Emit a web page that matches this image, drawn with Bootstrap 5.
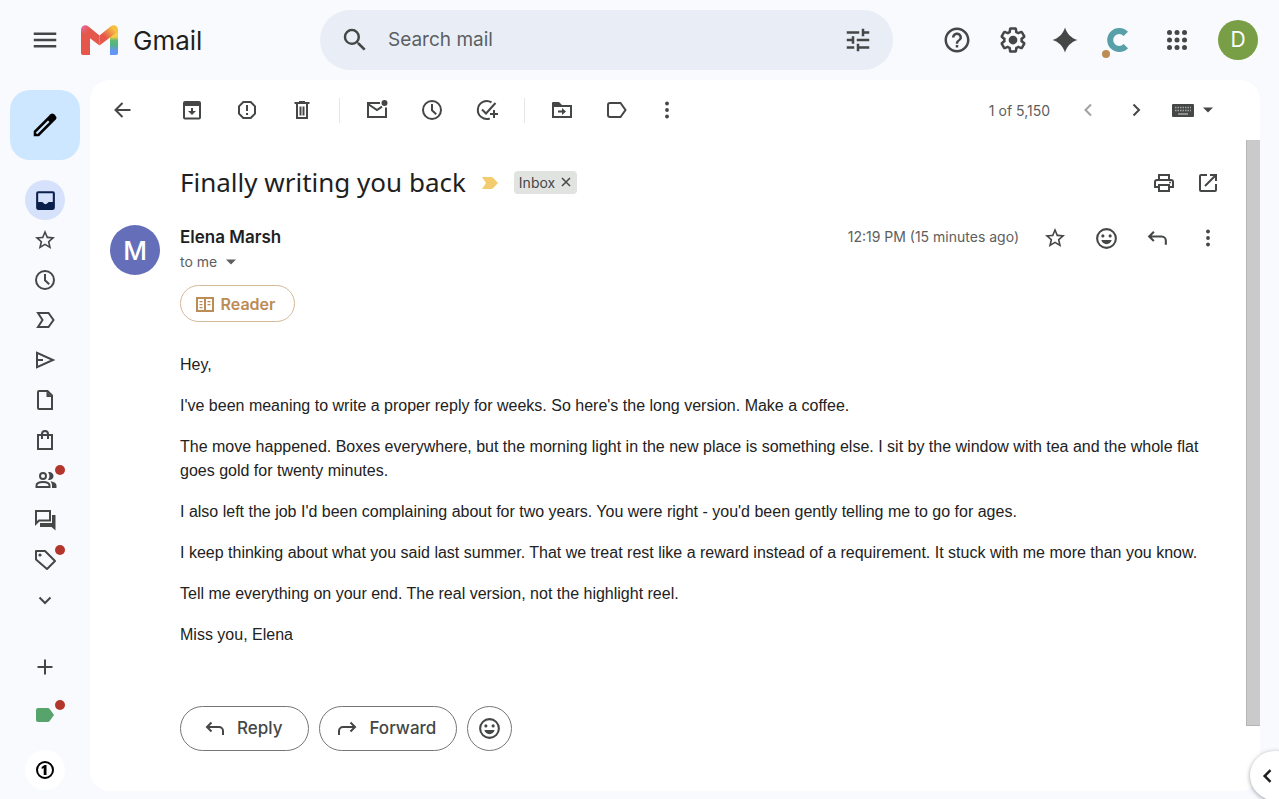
<!DOCTYPE html>
<html lang="en">
<head>
<meta charset="utf-8">
<meta name="viewport" content="width=device-width, initial-scale=1">
<title>Finally writing you back - Gmail</title>
<link href="https://cdn.jsdelivr.net/npm/bootstrap@5.3.0/dist/css/bootstrap.min.css" rel="stylesheet">
<style>
body{background:#f8fafe;color:#1f1f1f;font-family:Inter,Roboto,sans-serif;font-size:14px}
svg{display:block;fill:currentColor;flex:none}
.line{fill:none;stroke:currentColor;stroke-width:2}
.line.thin{stroke-width:1.5}
.line.thick{stroke-width:3}
.i30{width:30px;height:30px}
.i25{width:25px;height:25px}
.i24{width:24px;height:24px}
.i20{width:20px;height:20px}
.icon-btn{border:0;background:none;padding:0;color:#444746;display:flex;align-items:center;justify-content:center;flex:none;text-decoration:none;position:relative}
.box40{width:40px;height:40px;border-radius:50%}
.topbar{height:80px;padding-right:21px}
.brand-area{width:320px;padding-left:30px;gap:17px}
.brand-name{font-size:26px;color:#1f1f1f;text-decoration:none;gap:10px}
.searchbar{height:60px;background:#e9eef6;border-radius:30px;padding:0 20px;margin-right:49px}
.searchbar input{border:0;background:none;outline:0;font-size:19px;color:#444746;padding:0;margin-left:18px;min-width:0}
.searchbar input::placeholder{color:#5b5f62;opacity:1}
.top-icons{gap:22px}
.user-avatar{background:#789e46;color:#fff;font-size:21px}
.rail{width:90px;padding:10px 0}
.compose{width:70px;height:70px;border-radius:20px;background:#cce7ff;color:#000;margin-bottom:20px}
.current{background:#d6e2fb;color:#0b1f4b}
.notice{position:absolute;width:10px;height:10px;border-radius:50%;background:#b3362c;top:5px;right:0}
.panel{background:#fff;border-radius:20px;margin:0 19px 9px 0;overflow:hidden}
.toolbar{height:60px;padding:0 42px 0 13px}
.toolbar .tools{gap:15px}
.tools .back{margin-right:14px}
.tools .kebab{width:30px}
.rule{width:1px;height:25px;background:#e6e7e8;margin:0 2px}
.count{color:#5e5e5e;font-size:14px;margin-right:18px}
.thumb{width:14px;height:90%;background:#cacaca;border-left:1px solid #b4b4b4;border-bottom:1px solid #b4b4b4}
.reading{padding:18px 18px 38px 90px}
.subject{font-family:"Noto Sans",sans-serif;font-size:26px;font-weight:400;line-height:48px}
.subject-row{min-height:50px;margin-bottom:17px}
.subject-row .chip,.subject-row .subject{margin-bottom:2px}
.chip{background:#e1e3e1;border-radius:4px;height:23px;padding:0 6px 0 5px;color:#444746;gap:6px}
.sender-pic{width:50px;height:50px;border-radius:50%;background:#656fb9;color:#fff;font-size:26px;font-weight:500;margin-left:-70px;margin-right:20px}
.sender{font-size:17px;font-weight:600;line-height:24px;margin-bottom:1px}
.muted{color:#5e5e5e;line-height:24px}
.actions{gap:11px}
.actions .box40{height:26px}
.reader{height:37px;width:115px;border:1px solid #d5b998;border-radius:20px;background:#fff;color:#bb8c55;font-size:16px;font-weight:600;margin-top:11px;gap:7px;padding:0 4px 0 0}
.letter{font-family:"Liberation Sans",Arial,sans-serif;font-size:16px;line-height:24px;color:#222;margin-top:31px}
.letter p{margin-bottom:17px}
.answers{gap:10px;margin-top:59px}
.pill{height:45px;border:1px solid #747775;border-radius:23px;background:#fff;color:#444746;font-size:17px;font-weight:500;padding:0 26px 0 22px;gap:10px}
.pill.forward{padding:0 20px 0 15px}
.pill.round{width:45px;padding:0}
.side-tab{position:absolute;right:-21px;bottom:0;width:50px;height:49px;border-radius:25px;background:#fff;color:#1f1f1f;box-shadow:0 1px 4px rgba(60,64,67,.5);padding-right:14px}
.low{margin-top:27px}
.label-link{color:#57a36c;margin-top:8px;margin-bottom:15px}
.addon{background:#fff;color:#000}
</style>
</head>
<body>
<svg width="0" height="0" class="position-absolute" aria-hidden="true">
<symbol id="star" viewBox="0 0 24 24"><path d="M22 9.24l-7.19-.62L12 2 9.19 8.63 2 9.24l5.46 4.73L5.82 21 12 17.27 18.18 21l-1.63-7.03L22 9.24zM12 15.4l-3.76 2.27 1-4.28-3.32-2.88 4.38-.38L12 6.1l1.71 4.04 4.38.38-3.32 2.88 1 4.28L12 15.4z"/></symbol>
<symbol id="clock" viewBox="0 0 24 24"><g class="line"><circle cx="12" cy="12" r="9"/><path d="M12 6v6.2l4.2 4"/></g></symbol>
<symbol id="smile" viewBox="0 0 24 24"><circle class="line" cx="12" cy="12" r="9"/><circle cx="8.5" cy="9.5" r="1.5"/><circle cx="15.5" cy="9.5" r="1.5"/><path d="M7 13.5h10c-.7 2.4-2.7 4-5 4s-4.300-1.600-5-4z"/></symbol>
<symbol id="back-arrow" viewBox="0 0 24 24"><path class="line" d="M8.500 5.500L4 10l4.500 4.500M4 10h12a4 4 0 0 1 4 4v4"/></symbol>
<symbol id="dots" viewBox="0 0 24 24"><circle cx="12" cy="5.500" r="1.900"/><circle cx="12" cy="12" r="1.900"/><circle cx="12" cy="18.500" r="1.900"/></symbol>
<symbol id="caret" viewBox="0 0 24 24"><path d="M6 9h12l-6 6z"/></symbol>
</svg>

<div class="d-flex flex-column min-vh-100 position-relative overflow-hidden">
<header class="topbar d-flex align-items-center">
  <div class="brand-area d-flex align-items-center flex-shrink-0">
    <button class="icon-btn" aria-label="Main menu"><svg class="i30" viewBox="0 0 24 24"><path d="M3 18h18v-2H3v2zm0-5h18v-2H3v2zm0-7v2h18V6H3z"/></svg></button>
    <a href="#" class="brand-name d-flex align-items-center">
      <svg width="46" height="30" viewBox="0 0 46 30">
        <defs>
          <linearGradient id="lg" x2="0" y2="1"><stop offset=".3" stop-color="#f7cb45"/><stop offset=".45" stop-color="#5bb974"/><stop offset=".6" stop-color="#56b381"/><stop offset=".85" stop-color="#6494f8"/></linearGradient>
          <linearGradient id="rg" x1="0" y1="0" x2="1" y2="1"><stop offset="0" stop-color="#e46eae"/><stop offset=".35" stop-color="#e4574a"/></linearGradient>
          <linearGradient id="yg" x1="0" y1="1" x2="1" y2="0"><stop offset=".35" stop-color="#e4574a"/><stop offset=".8" stop-color="#f5c042"/></linearGradient>
        </defs>
        <path fill="#e4574a" d="M4 4h9v26H6a2 2 0 0 1-2-2z"/>
        <path fill="url(#lg)" d="M33 4h8v24a2 2 0 0 1-2 2h-6z"/>
        <path fill="url(#rg)" d="M4 5C4 .5 8.500-1 11.500 1.500L22.500 10.500V20.500L5.500 7.500Q4 6.500 4 5z"/>
        <path fill="url(#yg)" d="M41 5C41 .5 36.500-1 33.500 1.500L22.500 10.500V20.500L39.500 7.500Q41 6.500 41 5z"/>
      </svg>
      <span>Gmail</span>
    </a>
  </div>
  <form class="searchbar d-flex align-items-center flex-grow-1" role="search">
    <button type="button" class="icon-btn" aria-label="Search"><svg class="i30" viewBox="0 0 24 24"><path d="M15.500 14h-.79l-.28-.27A6.470 6.470 0 0 0 16 9.500 6.500 6.500 0 1 0 9.500 16c1.610 0 3.090-.59 4.230-1.570l.27.28v.79l5 4.990L20.490 19l-4.990-5zm-6 0C7.010 14 5 11.990 5 9.500S7.010 5 9.500 5 14 7.010 14 9.500 11.990 14 9.500 14z"/></svg></button>
    <input class="flex-grow-1" type="text" placeholder="Search mail" aria-label="Search mail">
    <button type="button" class="icon-btn" aria-label="Search options"><svg class="i30" viewBox="0 0 24 24"><path d="M3 17v2h6v-2H3zM3 5v2h10V5H3zm10 16v-2h8v-2h-8v-2h-2v6h2zM7 9v2H3v2h4v2h2V9H7zm14 4v-2H11v2h10zm-6-4h2V7h4V5h-4V3h-2v6z"/></svg></button>
  </form>
  <div class="top-icons d-flex align-items-center">
    <button class="icon-btn me-1" aria-label="Support"><svg class="i30" viewBox="0 0 24 24"><path d="M11 18h2v-2h-2v2zm1-16C6.480 2 2 6.480 2 12s4.480 10 10 10 10-4.480 10-10S17.520 2 12 2zm0 18c-4.410 0-8-3.590-8-8s3.590-8 8-8 8 3.590 8 8-3.590 8-8 8zm0-14c-2.210 0-4 1.790-4 4h2c0-1.100.9-2 2-2s2 .9 2 2c0 2-3 1.750-3 5h2c0-2.250 3-2.500 3-5 0-2.210-1.790-4-4-4z"/></svg></button>
    <button class="icon-btn" aria-label="Settings"><svg class="i30" viewBox="0 0 24 24"><path d="M13.850 22.250h-3.700c-.74 0-1.360-.54-1.450-1.270l-.27-1.890c-.27-.14-.53-.29-.79-.46l-1.800.72c-.7.26-1.470-.03-1.810-.65L2.200 15.530c-.35-.66-.2-1.440.36-1.880l1.530-1.190c-.01-.15-.02-.3-.02-.46 0-.15.01-.31.02-.46l-1.520-1.190c-.59-.45-.74-1.260-.37-1.880l1.850-3.190c.34-.62 1.110-.9 1.790-.63l1.810.73c.26-.17.52-.32.78-.46l.27-1.910c.09-.7.71-1.250 1.440-1.250h3.700c.74 0 1.360.54 1.450 1.270l.27 1.890c.27.14.53.29.79.46l1.800-.72c.71-.26 1.480.03 1.820.65l1.840 3.180c.36.66.2 1.440-.36 1.880l-1.520 1.190c.01.15.02.3.02.46s-.01.31-.02.46l1.520 1.190c.56.45.72 1.230.37 1.860l-1.860 3.220c-.34.62-1.110.9-1.800.63l-1.800-.72c-.26.17-.52.32-.78.46l-.27 1.910c-.1.68-.72 1.220-1.460 1.220zm-3.230-2h2.760l.37-2.550.53-.22c.44-.18.88-.44 1.340-.78l.45-.34 2.380.96 1.380-2.400-2.030-1.580.07-.56c.03-.26.06-.51.06-.78s-.03-.53-.06-.78l-.07-.56 2.030-1.580-1.390-2.400-2.390.96-.45-.35c-.42-.32-.87-.58-1.330-.77l-.52-.22-.37-2.550h-2.760l-.37 2.550-.53.21c-.44.19-.88.44-1.340.79l-.45.33-2.380-.95-1.390 2.390 2.030 1.580-.07.56a7 7 0 0 0-.06.79c0 .26.02.53.06.78l.07.56-2.030 1.580 1.380 2.400 2.390-.96.45.35c.43.33.86.58 1.330.77l.53.22.38 2.550z"/><circle cx="12" cy="12" r="3.500"/></svg></button>
    <button class="icon-btn" aria-label="Gemini"><svg class="i30" viewBox="0 0 24 24"><path d="M12 2c1.500 5 5 8.500 10 10-5 1.500-8.500 5-10 10-1.500-5-5-8.500-10-10 5-1.500 8.500-5 10-10z"/></svg></button>
    <button class="icon-btn" aria-label="Extension"><svg width="30" height="36" viewBox="0 0 30 36"><path d="M23.800 11.900A9 9 0 1 0 23.800 24.100" fill="none" stroke="#58a0a8" stroke-width="6"/><circle cx="4" cy="32" r="4" fill="#bd8c55"/></svg></button>
    <button class="icon-btn ms-2" aria-label="Google apps"><svg class="i30" viewBox="0 0 24 24"><g id="dot-row"><circle cx="6" cy="6" r="2"/><circle cx="12" cy="6" r="2"/><circle cx="18" cy="6" r="2"/></g><use href="#dot-row" y="6"/><use href="#dot-row" y="12"/></svg></button>
    <button class="icon-btn box40 user-avatar ms-1" aria-label="Account">D</button>
  </div>
</header>

<div class="d-flex flex-grow-1">
<nav class="rail d-flex flex-column align-items-center flex-shrink-0" aria-label="Mailboxes">
  <button class="icon-btn compose" aria-label="Compose"><svg class="i30" viewBox="0 0 24 24"><path d="M3 16.800V21h4.200L20.600 7.600a2 2 0 0 0 0-2.800l-1.400-1.400a2 2 0 0 0-2.800 0z"/><path d="M5.200 18.800l9.800-9.800" stroke="#cce7ff" stroke-width="1.700"/></svg></button>
  <a href="#" class="icon-btn box40 current" aria-label="Inbox"><svg class="i25" viewBox="0 0 24 24"><path d="M19 3H5a2 2 0 0 0-2 2v14c0 1.100.9 2 2 2h14a2 2 0 0 0 2-2V5a2 2 0 0 0-2-2zm0 10.500h-3.500q-.8 0-1.300.7-.8 1.300-2.200 1.300t-2.200-1.300q-.5-.7-1.300-.7H5V5h14z"/></svg></a>
  <a href="#" class="icon-btn box40" aria-label="Starred"><svg class="i24"><use href="#star"/></svg></a>
  <a href="#" class="icon-btn box40" aria-label="Snoozed"><svg class="i24"><use href="#clock"/></svg></a>
  <a href="#" class="icon-btn box40" aria-label="Important"><svg class="i24" viewBox="0 0 24 24"><path class="line" d="M5 5h10.500l5 7-5 7H5l4.500-7z"/></svg></a>
  <a href="#" class="icon-btn box40" aria-label="Sent"><svg class="i24" viewBox="0 0 24 24"><path class="line" d="M4 4.800v14.400L20 12zM4 12h6"/></svg></a>
  <a href="#" class="icon-btn box40" aria-label="Drafts"><svg class="i24" viewBox="0 0 24 24"><path class="line" d="M6 3h8.500L19 7.500V21H6q-1 0-1-1V4q0-1 1-1z"/><path d="M13.500 3v6H19z"/></svg></a>
  <a href="#" class="icon-btn box40" aria-label="Purchases"><svg class="i24" viewBox="0 0 24 24"><path class="line" d="M5 7h14v14H5zM9 11V6a3 3 0 0 1 6 0v5"/></svg></a>
  <a href="#" class="icon-btn box40" aria-label="Social"><svg class="i24" viewBox="0 0 24 24"><g class="line"><circle cx="10" cy="8" r="3"/><path d="M3.500 19v-1.500C3.500 15 7 14 10 14s6.500 1 6.500 3.500V19z"/></g><path d="M15 4.300a4 4 0 1 1 0 7.400 5.500 5.500 0 0 0 0-7.400zM17.500 13.200c3 .5 6 1.700 6 4.300V20H19v-2.500c0-1.800-.6-3.200-1.500-4.300z"/></svg><span class="notice"></span></a>
  <a href="#" class="icon-btn box40" aria-label="Forums"><svg class="i24" viewBox="0 0 24 24"><path class="line" d="M3 3h14v9.500H6l-3 3z"/><path d="M19 7h3.500v15.500L18.500 19H7v-4h12z"/></svg></a>
  <a href="#" class="icon-btn box40" aria-label="Promotions"><svg class="i24" viewBox="0 0 24 24"><path class="line" stroke-linejoin="round" d="M3 3h9l10 10-8 8L3 11.500z"/><circle cx="7" cy="7" r="1.600"/></svg><span class="notice"></span></a>
  <button class="icon-btn box40" aria-label="More"><svg class="i24" viewBox="0 0 24 24"><path class="line" d="M6.500 9.500L12 15l5.500-5.500"/></svg></button>
  <button class="icon-btn box40 low" aria-label="Create label"><svg class="i24" viewBox="0 0 24 24"><path class="line" d="M12 4.500v15M4.500 12h15"/></svg></button>
  <a href="#" class="icon-btn box40 label-link" aria-label="Label"><svg class="i24" viewBox="0 0 24 24"><path d="M5 5h9.500q1.500 0 2.200 1L21 12l-4.300 6q-.7 1-2.200 1H5q-2 0-2-2V7q0-2 2-2z"/></svg><span class="notice"></span></a>
  <button class="icon-btn box40 addon" aria-label="Password manager"><svg class="i24" viewBox="0 0 24 24"><circle class="line" cx="12" cy="12" r="8"/><path d="M10.700 17V10l-2 1V9l2.800-2h2v10z"/></svg></button>
</nav>

<main class="panel d-flex flex-column flex-grow-1">
  <div class="toolbar d-flex align-items-center justify-content-between">
    <div class="tools d-flex align-items-center">
      <button class="icon-btn box40 back" aria-label="Back to inbox"><svg class="i24" viewBox="0 0 24 24"><path class="line" d="M19.500 12H5M11.500 5L4.500 12l7 7"/></svg></button>
      <button class="icon-btn box40" aria-label="Archive"><svg class="i24" viewBox="0 0 24 24"><rect class="line" x="4" y="4" width="16" height="16.500" rx="1"/><path d="M4 4.500h16V8H4zM11 10h2v3h3l-4 4-4-4h3z"/></svg></button>
      <button class="icon-btn box40" aria-label="Report spam"><svg class="i24" viewBox="0 0 24 24"><path class="line" d="M8.300 4h7.400L20 8.300v7.400L15.700 20H8.300L4 15.700V8.300z"/><path d="M11 7h2v6h-2zM11 15h2v2h-2z"/></svg></button>
      <button class="icon-btn box40" aria-label="Delete"><svg class="i24" viewBox="0 0 24 24"><path class="line" d="M7 6v14h10V6M4.500 5h15M9 4h6M10.500 8.500v9M13.500 8.500v9"/></svg></button>
      <span class="rule"></span>
      <button class="icon-btn box40" aria-label="Mark as unread"><svg class="i24" viewBox="0 0 24 24"><path class="line" d="M15 5H3v14h18V9.500M3 6l9 6 5-3.300"/><circle cx="19.500" cy="5" r="3"/></svg></button>
      <button class="icon-btn box40" aria-label="Snooze"><svg class="i24"><use href="#clock"/></svg></button>
      <button class="icon-btn box40" aria-label="Add to tasks"><svg class="i24" viewBox="0 0 24 24"><path class="line" d="M16.500 4.300A9 9 0 1 0 14.800 20.500M7 11.500l4 4L20.500 5M19 12v8M15 16h8"/></svg></button>
      <span class="rule"></span>
      <button class="icon-btn box40" aria-label="Move to"><svg class="i24" viewBox="0 0 24 24"><path class="line" d="M3 6v13h18V8H11L9 6z"/><path d="M2 5q0-1 1-1h6l3 3v2H2zM12 10l4 3.500-4 3.500v-2.500H8v-2h4z"/></svg></button>
      <button class="icon-btn box40" aria-label="Labels"><svg class="i24" viewBox="0 0 24 24"><path class="line" d="M5 5h10.500l5 7-5 7H5q-2 0-2-2V7q0-2 2-2z"/></svg></button>
      <button class="icon-btn box40 kebab" aria-label="More actions"><svg class="i24"><use href="#dots"/></svg></button>
    </div>
    <div class="d-flex align-items-center">
      <span class="count">1 of 5,150</span>
      <button class="icon-btn box40 opacity-50" aria-label="Newer" disabled><svg class="i24" viewBox="0 0 24 24"><path class="line" d="M15 6.500L9.500 12l5.500 5.500"/></svg></button>
      <button class="icon-btn box40 ms-2" aria-label="Older"><svg class="i24" viewBox="0 0 24 24"><path class="line" d="M9.500 6.500L15 12l-5.500 5.500"/></svg></button>
      <button class="icon-btn ms-3" aria-label="Input tools"><svg width="22" height="14" viewBox="0 0 22 14"><rect y="1" width="22" height="13" rx="1"/><path stroke="#a5a7a7" stroke-width="1.500" stroke-dasharray="1.500 1" d="M3 4.500h16M3 7.500h16"/><path stroke="#a5a7a7" stroke-width="1.500" d="M6 11h10"/></svg><svg class="i20 ms-1"><use href="#caret"/></svg></button>
    </div>
  </div>

  <div class="d-flex flex-grow-1">
    <article class="reading flex-grow-1">
      <div class="subject-row d-flex align-items-center">
        <h1 class="subject">Finally writing you back</h1>
        <svg width="16" height="12" viewBox="0 0 16 12" class="ms-3 me-3" color="#f3cc70"><path d="M0 0h9q1.500 0 2.300 1L16 6l-4.700 5q-.8 1-2.300 1H0l4-6z"/></svg>
        <span class="chip d-flex align-items-center">Inbox <button class="icon-btn" aria-label="Remove label Inbox"><svg width="10" height="10" viewBox="0 0 10 10"><path class="line thin" d="M1 1l8 8M9 1L1 9"/></svg></button></span>
        <button class="icon-btn box40 ms-auto" aria-label="Print"><svg class="i24" viewBox="0 0 24 24"><path class="line" d="M7 8V4h10v4M7 16H3v-5q0-2 2-2h14q2 0 2 2v5h-4M7 14h10v6H7z"/><circle cx="18" cy="11.500" r="1"/></svg></button>
        <button class="icon-btn box40 ms-1" aria-label="Open in new window"><svg class="i24" viewBox="0 0 24 24"><path class="line" d="M11 4H5q-1 0-1 1v14q0 1 1 1h14q1 0 1-1v-6M14 4h6v6M20 4L9 15"/></svg></button>
      </div>
      <div class="d-flex align-items-start">
        <div class="sender-pic d-flex align-items-center justify-content-center flex-shrink-0">M</div>
        <div class="flex-grow-1">
          <div class="sender">Elena Marsh</div>
          <button class="icon-btn muted">to me <svg class="i20 ms-1"><use href="#caret"/></svg></button>
          <button class="reader d-flex align-items-center justify-content-center"><svg width="18" height="16" viewBox="0 0 18 16"><path class="line" d="M1 2h16v13H1zM9 2v13"/><path d="M3.500 5h3v1.300h-3zM3.500 8h3v1.300h-3zM3.500 11h3v1.300h-3zM11.500 5h3v1.300h-3zM11.500 8h3v1.300h-3z"/></svg>Reader</button>
        </div>
        <span class="muted me-3">12:19 PM (15 minutes ago)</span>
        <div class="actions d-flex">
          <button class="icon-btn box40" aria-label="Star"><svg class="i24"><use href="#star"/></svg></button>
          <button class="icon-btn box40" aria-label="Add reaction"><svg class="i25"><use href="#smile"/></svg></button>
          <button class="icon-btn box40" aria-label="Reply"><svg class="i25"><use href="#back-arrow"/></svg></button>
          <button class="icon-btn box40" aria-label="More"><svg class="i24"><use href="#dots"/></svg></button>
        </div>
      </div>
      <div class="letter">
        <p>Hey,</p>
        <p>I've been meaning to write a proper reply for weeks. So here's the long version. Make a coffee.</p>
        <p>The move happened. Boxes everywhere, but the morning light in the new place is something else. I sit by the window with tea and the whole flat goes gold for twenty minutes.</p>
        <p>I also left the job I'd been complaining about for two years. You were right - you'd been gently telling me to go for ages.</p>
        <p>I keep thinking about what you said last summer. That we treat rest like a reward instead of a requirement. It stuck with me more than you know.</p>
        <p>Tell me everything on your end. The real version, not the highlight reel.</p>
        <p class="mb-0">Miss you, Elena</p>
      </div>
      <div class="answers d-flex">
        <button class="pill d-flex align-items-center"><svg class="i24"><use href="#back-arrow"/></svg>Reply</button>
        <button class="pill forward d-flex align-items-center"><svg class="i24" viewBox="0 0 24 24"><path class="line" d="M15.500 5.500L20 10l-4.500 4.500M20 10H8a4 4 0 0 0-4 4v4"/></svg>Forward</button>
        <button class="pill round d-flex align-items-center justify-content-center" aria-label="Add reaction"><svg class="i25"><use href="#smile"/></svg></button>
      </div>
    </article>
    <div class="thumb flex-shrink-0"></div>
  </div>
</main>
</div>
<button class="icon-btn side-tab" aria-label="Show side panel"><svg class="i20" viewBox="0 0 24 24"><path class="line thick" d="M15 5l-7 7 7 7"/></svg></button>
</div>
<script src="https://cdn.jsdelivr.net/npm/bootstrap@5.3.0/dist/js/bootstrap.bundle.min.js"></script>
</body>
</html>
